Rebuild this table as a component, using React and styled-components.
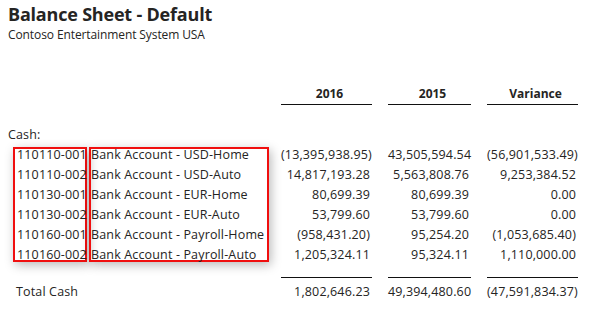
import React from "react";
import styled, { createGlobalStyle } from "styled-components";

const GlobalStyle = createGlobalStyle`
  body {
    margin: 0;
    background: #ffffff;
    font-family: "Open Sans", "Noto Sans", sans-serif;
    color: #252423;
  }
`;

const Page = styled.div`
  width: 604px;
  height: 312px;
  padding: 0 8px;
  box-sizing: border-box;
  overflow: hidden;
`;

const Title = styled.h1`
  margin: 0;
  padding-top: 2px;
  font-size: 18px;
  font-weight: 700;
  line-height: 25px;
  letter-spacing: -0.2px;
  color: #252423;
`;

const Subtitle = styled.div`
  font-size: 12px;
  line-height: 16px;
  letter-spacing: -0.1px;
`;

const Sheet = styled.div`
  display: grid;
  grid-template-columns: 5px 76px 192px 107px 99px 91px;
  grid-template-rows: repeat(9, 20px) 17px 20px;
  margin-top: 42px;
  font-size: 12.5px;
  letter-spacing: 0.15px;
  line-height: 20px;
`;

const HeadCell = styled.div`
  grid-column: ${(p) => p.col};
  grid-row: 1;
  width: ${(p) => p.w}px;
  font-size: 12px;
  letter-spacing: 0;
  font-weight: 700;
  text-align: center;
  border-bottom: 1.5px solid #111;
  box-sizing: border-box;
  line-height: 17px;
  padding-left: 6px;
`;

const Label = styled.div`
  grid-column: 1 / span 3;
  grid-row: ${(p) => p.row};
  padding-left: ${(p) => p.indent || 0}px;
`;

const Highlight = styled.div`
  grid-column: ${(p) => p.col};
  grid-row: 4 / span 6;
  width: ${(p) => p.w}px;
  margin-top: 2px;
  margin-bottom: 3px;
  border: 2px solid #f00f0f;
  box-sizing: border-box;
  box-shadow: 2px 3px 10px rgba(0, 0, 0, 0.28);
  pointer-events: none;
`;

const Code = styled.div`
  grid-column: 2;
  grid-row: ${(p) => p.row};
  padding-left: 4px;
  z-index: 1;
  white-space: nowrap;
`;

const Name = styled.div`
  grid-column: 3;
  grid-row: ${(p) => p.row};
  padding-left: 2px;
  z-index: 1;
  white-space: nowrap;
`;

const Amount = styled.div`
  grid-column: ${(p) => p.col};
  grid-row: ${(p) => p.row};
  width: ${(p) => p.w}px;
  text-align: right;
  padding-right: 2px;
  box-sizing: border-box;
  white-space: nowrap;
`;

const TotalRule = styled.div`
  grid-column: ${(p) => p.col};
  grid-row: 10;
  width: ${(p) => p.w}px;
  align-self: end;
  margin-bottom: 4px;
  border-top: 1.5px solid #111;
`;

const columns = [
  { col: 4, w: 91, head: "2016" },
  { col: 5, w: 83, head: "2015" },
  { col: 6, w: 91, head: "Variance" },
];

const rows = [
  ["110110-001", "Bank Account - USD-Home", "(13,395,938.95)", "43,505,594.54", "(56,901,533.49)"],
  ["110110-002", "Bank Account - USD-Auto", "14,817,193.28", "5,563,808.76", "9,253,384.52"],
  ["110130-001", "Bank Account - EUR-Home", "80,699.39", "80,699.39", "0.00"],
  ["110130-002", "Bank Account - EUR-Auto", "53,799.60", "53,799.60", "0.00"],
  ["110160-001", "Bank Account - Payroll-Home", "(958,431.20)", "95,254.20", "(1,053,685.40)"],
  ["110160-002", "Bank Account - Payroll-Auto", "1,205,324.11", "95,324.11", "1,110,000.00"],
];

const totals = ["1,802,646.23", "49,394,480.60", "(47,591,834.37)"];

export default function App() {
  return (
    <Page>
      <GlobalStyle />
      <Title>Balance Sheet - Default</Title>
      <Subtitle>Contoso Entertainment System USA</Subtitle>
      <Sheet>
        {columns.map((c) => (
          <HeadCell key={c.head} col={c.col} w={c.w}>
            {c.head}
          </HeadCell>
        ))}
        <Label row={3}>Cash:</Label>
        <Highlight col={2} w={74} />
        <Highlight col={3} w={180} />
        {rows.map((r, i) => (
          <React.Fragment key={r[0]}>
            <Code row={i + 4}>{r[0]}</Code>
            <Name row={i + 4}>{r[1]}</Name>
            {columns.map((c, j) => (
              <Amount key={c.head} row={i + 4} col={c.col} w={c.w}>
                {r[j + 2]}
              </Amount>
            ))}
          </React.Fragment>
        ))}
        {columns.map((c) => (
          <TotalRule key={c.head} col={c.col} w={c.w} />
        ))}
        <Label row={11} indent={8}>
          Total Cash
        </Label>
        {columns.map((c, j) => (
          <Amount key={c.head} row={11} col={c.col} w={c.w}>
            {totals[j]}
          </Amount>
        ))}
      </Sheet>
    </Page>
  );
}
